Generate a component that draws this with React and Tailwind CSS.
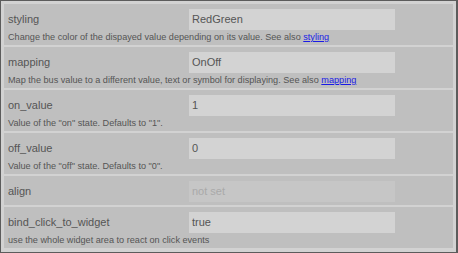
export default function App() {
  const rows = [
    {
      label: "styling",
      value: "RedGreen",
      desc: "Change the color of the dispayed value depending on its value. See also ",
      link: "styling",
    },
    {
      label: "mapping",
      value: "OnOff",
      desc: "Map the bus value to a different value, text or symbol for displaying. See also ",
      link: "mapping",
    },
    { label: "on_value", value: "1", desc: 'Value of the "on" state. Defaults to "1".' },
    { label: "off_value", value: "0", desc: 'Value of the "off" state. Defaults to "0".' },
    { label: "align", value: "not set", placeholder: true },
    { label: "bind_click_to_widget", value: "true", desc: "use the whole widget area to react on click events" },
  ];
  return (
    <div
      className="w-[458px] h-[253px] border-l border-t border-b border-r-2 border-[#5c5c5c] bg-[#d2d2d2] p-[3px] flex flex-col gap-[2px] text-[#555555]"
      style={{ fontFamily: '"Liberation Sans", Arial, sans-serif' }}
    >
      {rows.map((r) => (
        <div key={r.label} className={`bg-[#bfbfbf] pl-[4px] pt-[5px] ${r.desc ? "pb-[1px]" : "pb-[3px]"}`}>
          <div className="flex items-center h-[21px]">
            <div className="w-[181px] text-[11px] leading-[21px]">{r.label}</div>
            <div
              className={`w-[206px] h-[21px] pl-[3px] text-[11px] leading-[21px] ${
                r.placeholder ? "bg-[#c6c6c6] text-[#a9a9a9]" : "bg-[#d3d3d3] text-[#555555]"
              }`}
            >
              {r.value}
            </div>
          </div>
          {r.desc && (
            <div className="text-[9.15px] leading-[14px] whitespace-nowrap">
              {r.desc}
              {r.link && <span className="text-[#1a1ae6] underline">{r.link}</span>}
            </div>
          )}
        </div>
      ))}
    </div>
  );
}
